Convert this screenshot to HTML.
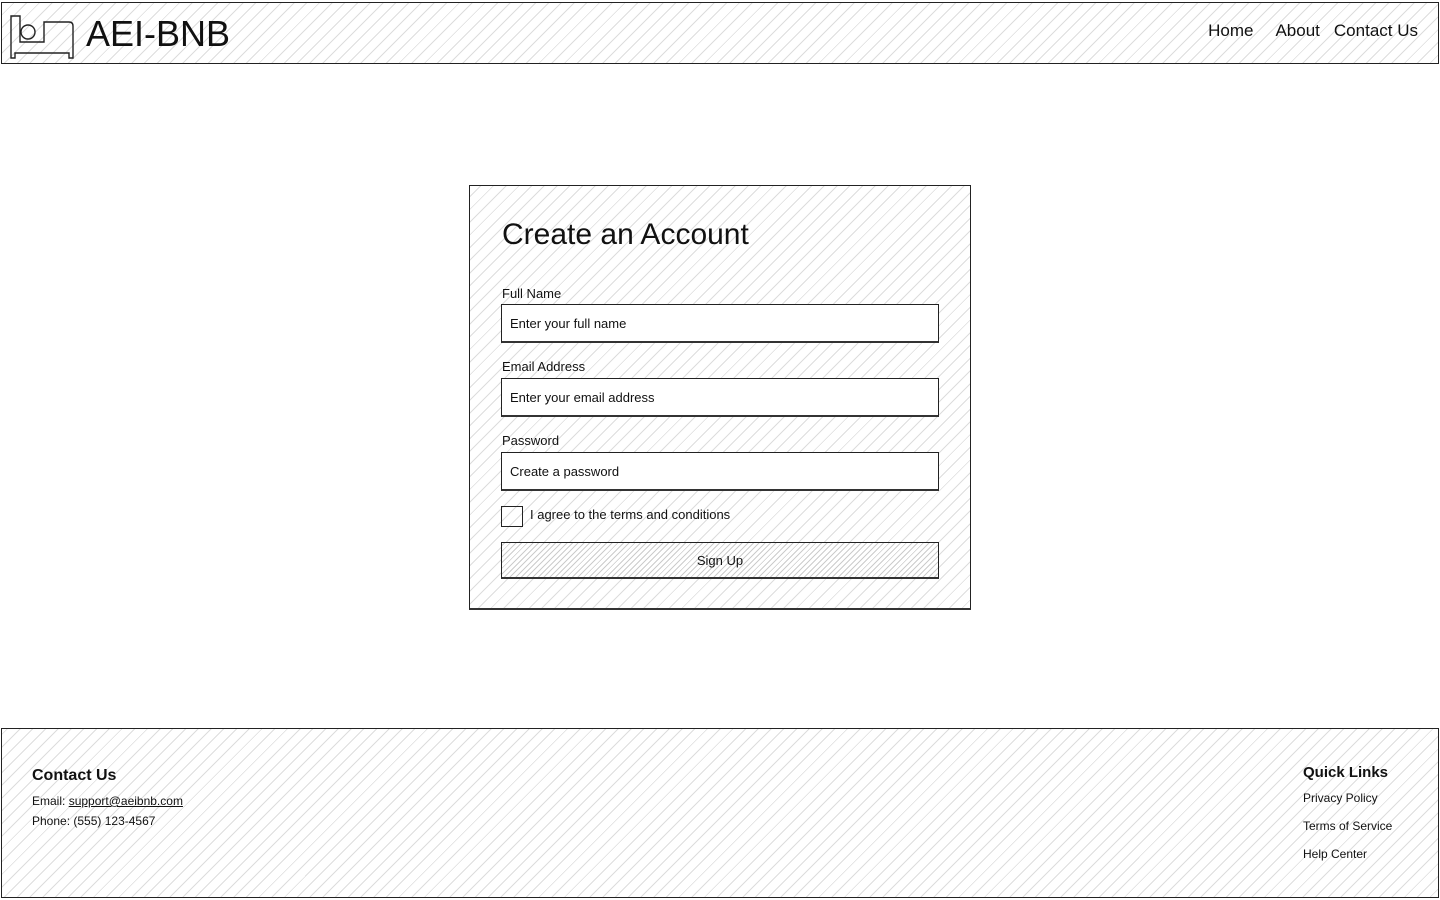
<!DOCTYPE html>
<html><head><style>
*{box-sizing:border-box;margin:0;padding:0}
body{width:1440px;height:900px;background:#fff;font-family:"Comic Sans MS","Liberation Sans",sans-serif;color:#111;position:relative;overflow:hidden}
.hatch{background:repeating-linear-gradient(-45deg,#fff 0 5px,#ddd 5px 6px,#fff 6px 9px)}
.hatch2{background:repeating-linear-gradient(-45deg,#fff 0 2px,#ccc 2px 3px,#fff 3px 4px)}
.box{position:absolute;border:1.5px solid #222}
header{left:1px;top:2px;width:1438px;height:62px;border-bottom:2px solid #333}
.logo{position:absolute;left:84px;top:10px;font-size:36px;font-weight:300}
nav{position:absolute;right:20px;top:18px;font-size:17px}
nav span{margin-left:22px}
.card{left:469px;top:185px;width:502px;height:425px;border-bottom:2px solid #333}
h1{position:absolute;left:32px;top:32px;font-size:30px;font-weight:400}
.lbl{position:absolute;left:32px;font-size:13px}
.in{position:absolute;left:31px;width:438px;height:39px;background:#fff;border:1.5px solid #222;border-bottom:2px solid #333;font-size:13px;padding:11px 8px}
.chk{position:absolute;left:31px;top:320px;width:22px;height:21px;border:1.5px solid #222}
.btn{position:absolute;left:31px;top:356px;width:438px;height:37px;border:1.5px solid #222;border-bottom:2px solid #333;text-align:center;font-size:13px;padding-top:10px}
footer{left:1px;top:728px;width:1438px;height:170px}
</style></head><body>
<header class="box hatch">
<svg style="position:absolute;left:6px;top:10px" width="68" height="46" viewBox="0 0 68 46" fill="none" stroke="#222" stroke-width="1.4"><path d="M3 3v42h4v-5h54v5h4V13q0-4-4-4H36v20H12V3z"/><circle cx="20" cy="19" r="7"/></svg>
<div class="logo">AEI-BNB</div>
<nav><span>Home</span><span>About</span><span style="margin-left:14px">Contact Us</span></nav>
</header>
<div class="box hatch card">
<h1>Create an Account</h1>
<div class="lbl" style="top:100px">Full Name</div>
<div class="in" style="top:118px">Enter your full name</div>
<div class="lbl" style="top:173px">Email Address</div>
<div class="in" style="top:192px">Enter your email address</div>
<div class="lbl" style="top:247px">Password</div>
<div class="in" style="top:266px">Create a password</div>
<div class="chk"></div>
<div class="lbl" style="top:321px;left:60px">I agree to the terms and conditions</div>
<div class="btn hatch2">Sign Up</div>
</div>
<footer class="box hatch">
<div style="position:absolute;left:30px;top:38px;font-size:16px;font-weight:bold">Contact Us</div>
<div style="position:absolute;left:30px;top:65px;font-size:12px">Email: <u>support@aeibnb.com</u></div>
<div style="position:absolute;left:30px;top:85px;font-size:12px">Phone: (555) 123-4567</div>
<div style="position:absolute;left:1301px;top:35px;font-size:15px;font-weight:bold">Quick Links</div>
<div style="position:absolute;left:1301px;top:62px;font-size:12px">Privacy Policy</div>
<div style="position:absolute;left:1301px;top:90px;font-size:12px">Terms of Service</div>
<div style="position:absolute;left:1301px;top:118px;font-size:12px">Help Center</div>
</footer>
</body></html>
